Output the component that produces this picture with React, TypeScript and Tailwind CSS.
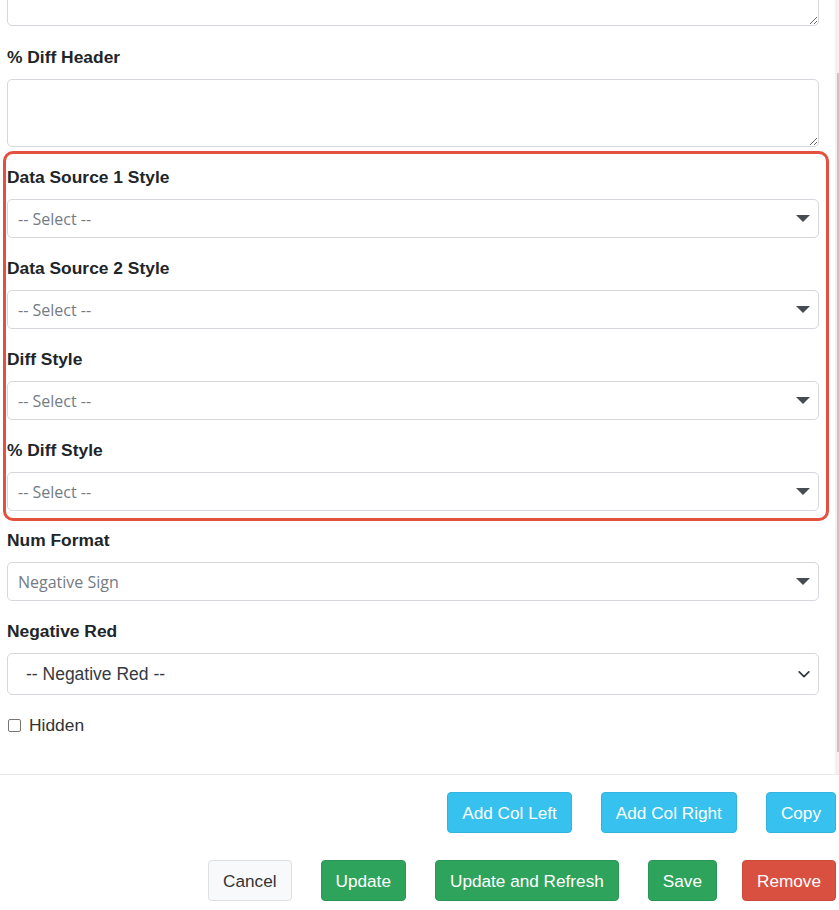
import React from "react";

function FieldLabel({ children, className = "" }: { children: React.ReactNode; className?: string }) {
  return (
    <div className={`h-[24px] leading-[25px] mb-[10px] text-[17.4px] font-bold text-[#212529] ${className}`}>
      {children}
    </div>
  );
}

function StyleSelect({ text }: { text: string }) {
  return (
    <div className="h-[39px] flex items-center justify-between border border-[#d4d7dc] rounded-[5px] bg-white pl-[10px] pr-[8px]">
      <span className="font-['Open_Sans','Noto_Sans',sans-serif] text-[16px] text-[#747b84]">{text}</span>
      <svg width="14" height="8" viewBox="0 0 14 8">
        <path d="M0 0h14L7 7z" fill="#474c52" />
      </svg>
    </div>
  );
}

function Btn({ label, tone }: { label: string; tone: "info" | "success" | "danger" | "light" }) {
  const tones = {
    info: "bg-[#36c1ee] border-[#31b5e0] text-white",
    success: "bg-[#2ea35c] border-[#2a9655] text-white",
    danger: "bg-[#d94f40] border-[#cc4a3c] text-white",
    light: "bg-[#f8f9fa] border-[#dcdfe3] text-[#333]",
  };
  return (
    <button className={`h-[41px] px-[14px] pt-[2px] rounded-[4px] border text-[17.2px] leading-none ${tones[tone]}`}>
      {label}
    </button>
  );
}

export default function App() {
  const styleFields = ["Data Source 1 Style", "Data Source 2 Style", "Diff Style", "% Diff Style"];

  return (
    <div className="w-[839px] h-[910px] bg-white overflow-hidden font-['Liberation_Sans',Arial,sans-serif] text-[#212529]">
      {/* Modal body */}
      <div className="flex h-[775px] border-b border-[#e6e8eb]">
        <div className="flex-1 flex flex-col pl-[7px] pr-[16px] overflow-hidden">
          <textarea className="mt-[-42px] h-[68px] shrink-0 border border-[#d4d7dc] rounded-[5px] outline-none" />

          <FieldLabel className="mt-[19px]">% Diff Header</FieldLabel>
          <textarea className="h-[68px] shrink-0 border border-[#d4d7dc] rounded-[5px] outline-none" />

          {/* Highlighted style group */}
          <div className="relative mt-[18px]">
            <div className="absolute -top-[14px] -bottom-[10px] -left-[4px] -right-[10px] border-[3px] border-[#e4503f] rounded-[10px] pointer-events-none" />
            {styleFields.map((f, i) => (
              <div key={f} className={i > 0 ? "mt-[18px]" : ""}>
                <FieldLabel>{f}</FieldLabel>
                <StyleSelect text="-- Select --" />
              </div>
            ))}
          </div>

          <FieldLabel className="mt-[17px]">Num Format</FieldLabel>
          <StyleSelect text="Negative Sign" />

          <FieldLabel className="mt-[18px]">Negative Red</FieldLabel>
          <div className="h-[42px] flex items-center justify-between border border-[#d4d7dc] rounded-[5px] pl-[18px] pr-[7px]">
            <span className="text-[17.5px] text-[#333a40]">-- Negative Red --</span>
            <svg width="14" height="14" viewBox="0 0 16 16">
              <path d="M2.5 5.5l5.5 5.5 5.5-5.5" fill="none" stroke="#343a40" strokeWidth="2" strokeLinecap="round" strokeLinejoin="round" />
            </svg>
          </div>

          <label className="mt-[20px] h-[20px] flex items-center">
            <span className="ml-[1px] w-[13px] h-[13px] border border-[#767676] rounded-[2px] bg-white" />
            <span className="ml-[8px] text-[17.4px] text-[#333]">Hidden</span>
          </label>
        </div>

        {/* Scrollbar */}
        <div className="w-[4px] bg-[#f1f1f1] pt-[73px]">
          <div className="ml-[2px] w-[2px] h-[679px] bg-[#c6c6c6]" />
        </div>
      </div>

      {/* Footer */}
      <div className="pt-[17px] pr-[3px]">
        <div className="flex justify-end gap-[29px]">
          <Btn label="Add Col Left" tone="info" />
          <Btn label="Add Col Right" tone="info" />
          <Btn label="Copy" tone="info" />
        </div>
        <div className="mt-[27px] flex justify-end gap-[29px]">
          <Btn label="Cancel" tone="light" />
          <Btn label="Update" tone="success" />
          <Btn label="Update and Refresh" tone="success" />
          <div className="flex gap-[25px]">
            <Btn label="Save" tone="success" />
            <Btn label="Remove" tone="danger" />
          </div>
        </div>
      </div>
    </div>
  );
}
